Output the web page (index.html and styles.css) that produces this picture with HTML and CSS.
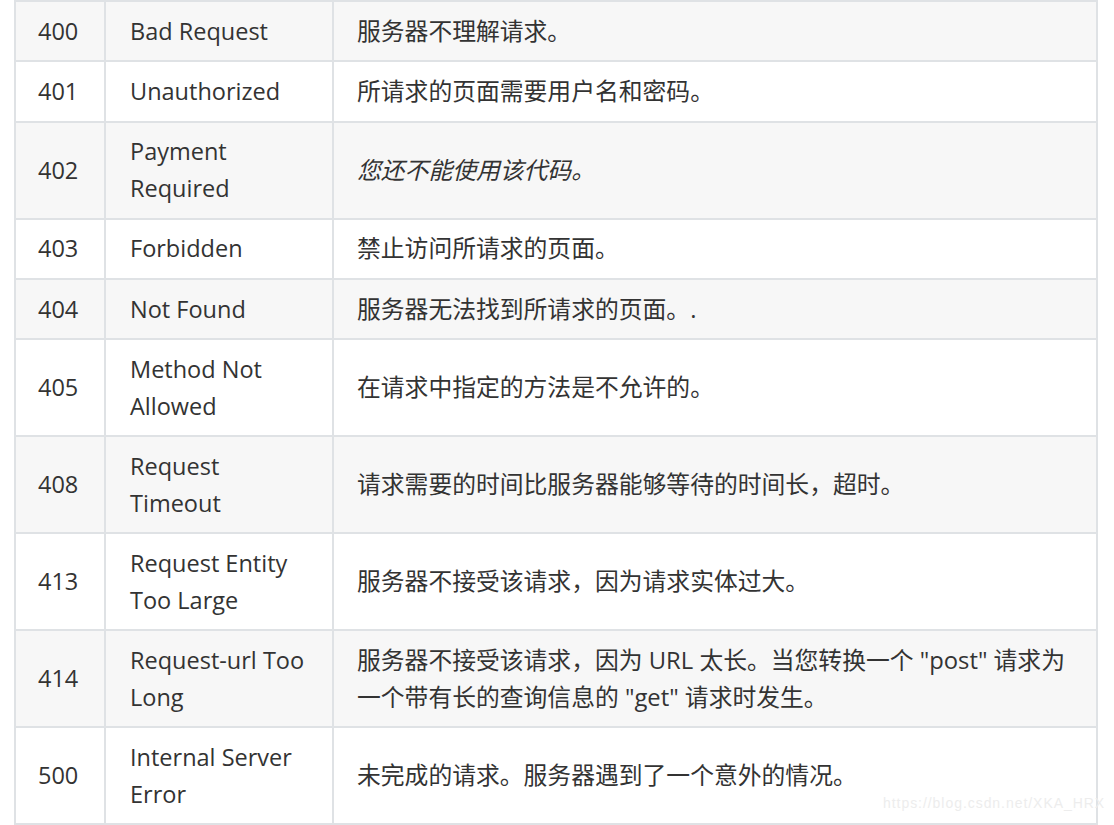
FILE: index.html
```html
<!DOCTYPE html>
<html lang="zh-CN">
<head>
<meta charset="utf-8">
<title>HTTP 状态码</title>
<link rel="stylesheet" href="styles.css">
</head>
<body>
<div class="page">
  <div class="status-table">
    <div class="row"><div class="cell code">400</div><div class="cell name">Bad Request</div><div class="cell desc">服务器不理解请求。</div></div>
    <div class="row"><div class="cell code">401</div><div class="cell name">Unauthorized</div><div class="cell desc">所请求的页面需要用户名和密码。</div></div>
    <div class="row"><div class="cell code">402</div><div class="cell name">Payment Required</div><div class="cell desc"><em>您还不能使用该代码。</em></div></div>
    <div class="row"><div class="cell code">403</div><div class="cell name">Forbidden</div><div class="cell desc">禁止访问所请求的页面。</div></div>
    <div class="row"><div class="cell code">404</div><div class="cell name">Not Found</div><div class="cell desc">服务器无法找到所请求的页面。.</div></div>
    <div class="row"><div class="cell code">405</div><div class="cell name">Method Not Allowed</div><div class="cell desc">在请求中指定的方法是不允许的。</div></div>
    <div class="row"><div class="cell code">408</div><div class="cell name">Request Timeout</div><div class="cell desc">请求需要的时间比服务器能够等待的时间长，超时。</div></div>
    <div class="row"><div class="cell code">413</div><div class="cell name">Request Entity Too Large</div><div class="cell desc">服务器不接受该请求，因为请求实体过大。</div></div>
    <div class="row"><div class="cell code">414</div><div class="cell name">Request-url Too Long</div><div class="cell desc">服务器不接受该请求，因为 URL 太长。当您转换一个 "post" 请求为一个带有长的查询信息的 "get" 请求时发生。</div></div>
    <div class="row"><div class="cell code">500</div><div class="cell name">Internal Server Error</div><div class="cell desc">未完成的请求。服务器遇到了一个意外的情况。</div></div>
  </div>
  <div class="watermark">https://blog.csdn.net/XKA_HRX</div>
</div>
</body>
</html>
```

FILE: styles.css
```css
html, body {
  margin: 0;
  padding: 0;
  background: #ffffff;
}

.page {
  position: relative;
  width: 1114px;
  height: 825px;
  overflow: hidden;
}

.status-table {
  display: grid;
  grid-template-columns: 90px 228px 764px;
  margin-left: 14px;
  width: max-content;
  border-left: 2px solid #dfe2e5;
  border-top: 2px solid #dfe2e5;
  font-family: "Open Sans", "Noto Sans CJK SC", sans-serif;
  font-size: 23.5px;
  line-height: 36.75px;
  color: #333333;
}

.row {
  display: contents;
}

.cell {
  box-sizing: border-box;
  display: flex;
  align-items: center;
  padding: 10.75px 22px;
  border-right: 2px solid #dfe2e5;
  border-bottom: 2px solid #dfe2e5;
  background: #ffffff;
}

.cell.name {
  padding-left: 24px;
  padding-right: 20px;
}

.cell.desc {
  font-size: 23.8px;
  padding-left: 23px;
  padding-right: 24px;
}

.row:nth-child(odd) .cell {
  background: #f7f7f7;
}

.desc em {
  font-style: italic;
}

.watermark {
  position: absolute;
  left: 883px;
  top: 795px;
  font-family: "Liberation Sans", Arial, sans-serif;
  font-size: 14px;
  letter-spacing: 0.95px;
  color: #ededed;
  white-space: nowrap;
}
```
